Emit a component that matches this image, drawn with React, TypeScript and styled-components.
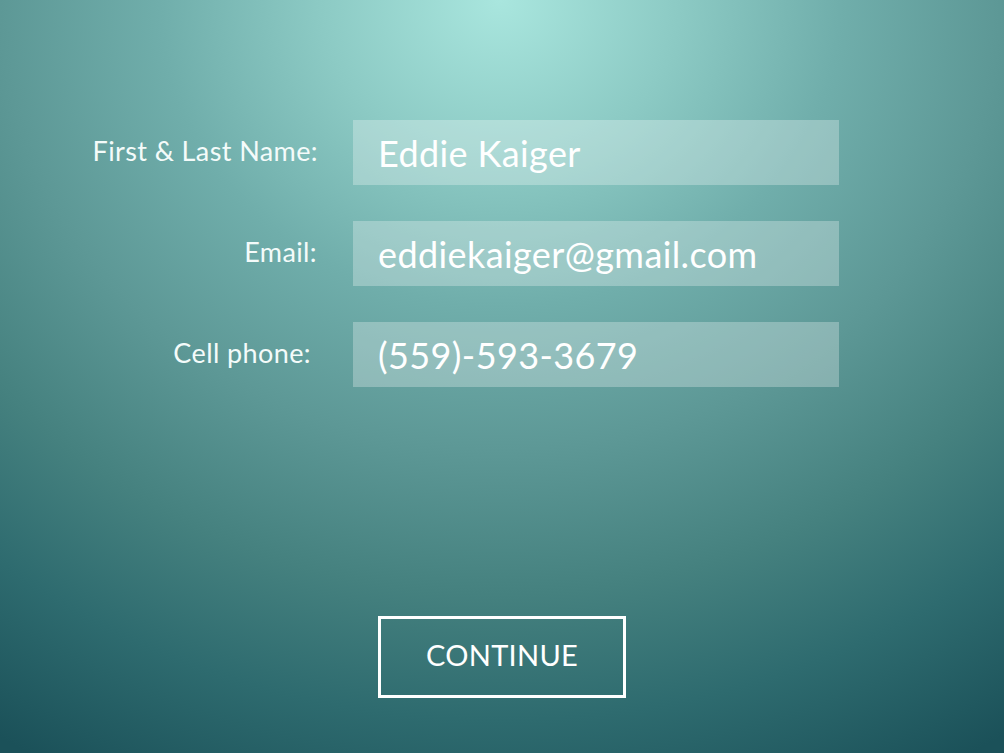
import React from "react";
import styled, { createGlobalStyle } from "styled-components";

const GlobalStyle = createGlobalStyle`
  html, body {
    margin: 0;
    padding: 0;
    height: 100%;
  }
  body {
    font-family: Lato, "Noto Sans", "Liberation Sans", sans-serif;
    background: #1b5159;
  }
`;

const Page = styled.div`
  width: 1004px;
  height: 753px;
  box-sizing: border-box;
  padding-top: 120px;
  display: flex;
  flex-direction: column;
  background: radial-gradient(
    ellipse 1000px 900px at 500px 0px,
    #a9e6de 0%,
    #8ccac4 18%,
    #70aeab 34%,
    #5d9896 50%,
    #45817f 66%,
    #2e6b6f 80%,
    #1b5159 96%
  );
  color: #ffffff;
  overflow: hidden;
`;

const Form = styled.div`
  display: grid;
  grid-template-columns: 318px 486px;
  column-gap: 35px;
  row-gap: 36px;
  align-items: center;
`;

const Label = styled.label<{ $nudge?: number }>`
  justify-self: end;
  padding-right: ${(p) => p.$nudge ?? 0}px;
  margin-top: -5px;
  font-size: 27px;
  font-weight: 400;
  color: #f4fbfa;
  letter-spacing: 0.4px;
`;

const Field = styled.div`
  height: 65px;
  box-sizing: border-box;
  padding-left: 25px;
  display: flex;
  align-items: center;
  background: rgba(255, 255, 255, 0.28);
  font-size: 36px;
  font-weight: 400;
  letter-spacing: 0.4px;
  color: #ffffff;
`;

const Footer = styled.div`
  margin-top: 229px;
  display: flex;
  justify-content: center;
`;

const Button = styled.button`
  width: 248px;
  height: 82px;
  box-sizing: border-box;
  border: 3px solid #ffffff;
  background: transparent;
  color: #ffffff;
  font-family: Lato, "Noto Sans", "Liberation Sans", sans-serif;
  font-size: 29px;
  font-weight: 400;
  letter-spacing: 0.3px;
  padding: 0 0 5px 0;
  cursor: pointer;
`;

const rows = [
  { label: "First & Last Name:", value: "Eddie Kaiger", nudge: 0 },
  { label: "Email:", value: "eddiekaiger@gmail.com", nudge: 1 },
  { label: "Cell phone:", value: "(559)-593-3679", nudge: 7 },
];

export default function App() {
  return (
    <>
      <GlobalStyle />
      <Page>
        <Form>
          {rows.map((r) => (
            <React.Fragment key={r.label}>
              <Label $nudge={r.nudge}>{r.label}</Label>
              <Field>{r.value}</Field>
            </React.Fragment>
          ))}
        </Form>
        <Footer>
          <Button>CONTINUE</Button>
        </Footer>
      </Page>
    </>
  );
}
